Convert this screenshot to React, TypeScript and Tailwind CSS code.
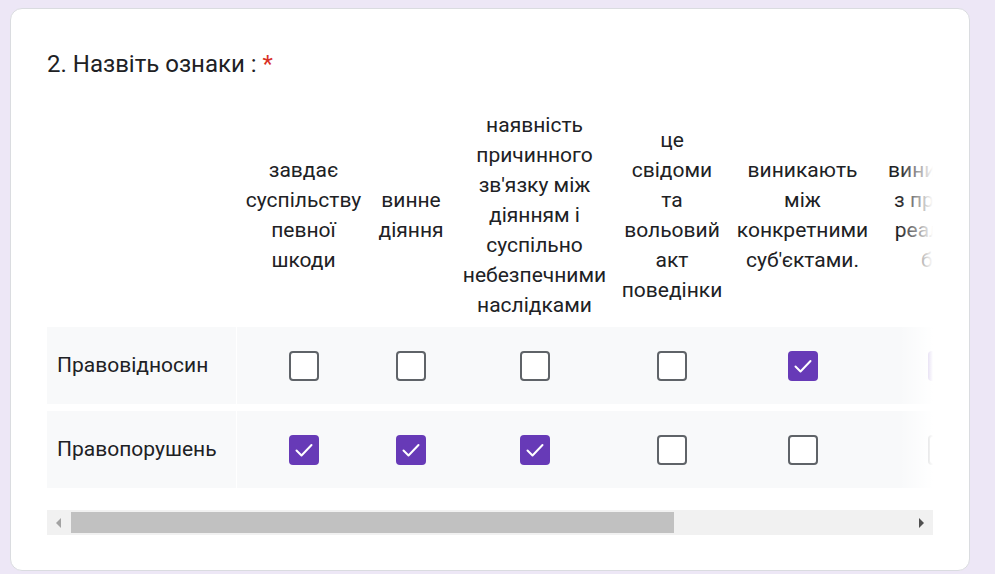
import React from 'react';

const COLUMNS = [
  {label: 'завдає суспільству певної шкоди', width: 'w-[133px]'},
  {label: 'винне діяння', width: 'w-[82px]'},
  {label: "наявність причинного зв'язку між діянням і суспільно небезпечними наслідками", width: 'w-[165px]'},
  {label: 'це свідоми та вольовий акт поведінки', width: 'w-[110px]'},
  {label: "виникають між конкретними суб'єктами.", width: 'w-[151px]'},
  {label: 'виникають з приводу реалізації благ', width: 'w-[130px]'},
];

const ROWS = [
  {label: 'Правовідносин', checked: [false, false, false, false, true, true]},
  {label: 'Правопорушень', checked: [true, true, true, false, false, false]},
];

function Checkbox({checked}: {checked: boolean}) {
  if (checked) {
    return (
      <span className="flex h-[30px] w-[30px] items-center justify-center rounded-[4px] bg-[#673ab7]">
        <svg width="30" height="30" viewBox="0 0 30 30" fill="none">
          <path d="M7.5 15.5l5 5 10-10.5" stroke="#fff" strokeWidth="2" strokeLinecap="round" strokeLinejoin="round" />
        </svg>
      </span>
    );
  }
  return <span className="block h-[30px] w-[30px] rounded-[4px] border-[2.5px] border-[#5f6368] bg-white" />;
}

export default function App() {
  return (
    <div className="h-[574px] overflow-hidden bg-[#ede7f6] pl-[10px] pt-[8px] font-['Roboto',sans-serif] text-[#202124]">
      <div className="h-[563px] w-[960px] rounded-xl border border-[#dadce0] bg-white pl-[36px] pt-[37px]">
        <h2 className="text-[24px] leading-[36px]">
          2. Назвіть ознаки : <span className="text-[#d93025]">*</span>
        </h2>

        <div className="relative mt-[28px] w-[886px] overflow-hidden">
          <div className="w-max">
            <div className="flex">
              <div className="w-[190px] shrink-0" />
              {COLUMNS.map((c) => (
                <div
                  key={c.label}
                  className={`${c.width} flex shrink-0 items-center justify-center px-[4px] text-center text-[21px] leading-[30px]`}
                >
                  {c.label}
                </div>
              ))}
            </div>

            <div className="mt-[7px] flex flex-col gap-[7px]">
              {ROWS.map((r) => (
                <div key={r.label} className="flex h-[77px] bg-[#f8f9fa]">
                  <div className="flex w-[190px] shrink-0 items-center border-r border-white pl-[10px] text-[21px]">
                    {r.label}
                  </div>
                  {COLUMNS.map((c, i) => (
                    <div key={c.label} className={`${c.width} flex shrink-0 items-center justify-center`}>
                      <Checkbox checked={r.checked[i]} />
                    </div>
                  ))}
                </div>
              ))}
            </div>
          </div>
          <div className="pointer-events-none absolute right-0 top-0 h-full w-[34px] bg-gradient-to-r from-white/0 to-white" />
        </div>

        <div className="mt-[22px] flex h-[25px] w-[886px] items-center bg-[#f1f1f1]">
          <div className="flex w-[24px] shrink-0 justify-center">
            <svg width="6" height="10" viewBox="0 0 6 10">
              <path d="M5 0L0 5l5 5z" fill="#a3a3a3" />
            </svg>
          </div>
          <div className="h-[21px] w-[603px] bg-[#c1c1c1]" />
          <div className="flex-1" />
          <div className="flex w-[24px] shrink-0 justify-center">
            <svg width="6" height="10" viewBox="0 0 6 10">
              <path d="M1 0l5 5-5 5z" fill="#505050" />
            </svg>
          </div>
        </div>
      </div>
    </div>
  );
}
